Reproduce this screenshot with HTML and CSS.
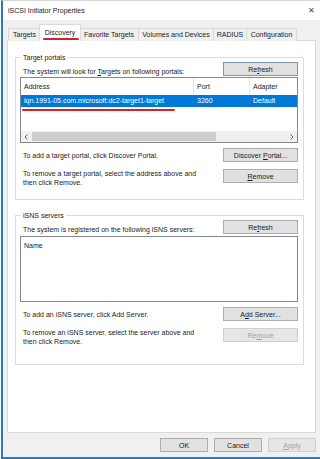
FILE: index.html
```html
<!DOCTYPE html>
<html lang="en">
<head>
    <meta charset="UTF-8">
    <meta name="viewport" content="width=device-width, initial-scale=1.0">
    <title>iSCSI Initiator Properties</title>
    <link rel="stylesheet" href="styles.css">
</head>
<body>
    <div class="window">
        <div class="titlebar">
            <span class="title">iSCSI Initiator Properties</span>
            <span class="close">&#x2715;</span>
        </div>

        <div class="tabs">
            <div class="tab tab-targets">Targets</div>
            <div class="tab tab-discovery active">Discovery</div>
            <div class="tab tab-favorite">Favorite Targets</div>
            <div class="tab tab-volumes">Volumes and Devices</div>
            <div class="tab tab-radius">RADIUS</div>
            <div class="tab tab-config">Configuration</div>
        </div>

        <div class="panel">
            <!-- Target portals -->
            <fieldset class="group group-portals">
                <legend>Target portals</legend>
                <div class="row row-top">
                    <span class="text">The system will look for <u>T</u>argets on following portals:</span>
                    <button class="btn default">Re<u>f</u>resh</button>
                </div>
                <div class="list list-portals">
                    <div class="list-head">
                        <span class="col col-address">Address</span>
                        <span class="col col-port">Port</span>
                        <span class="col col-adapter">Adapter</span>
                    </div>
                    <div class="list-row selected">
                        <span class="col col-address">iqn.1991-05.com.microsoft:dc2-target1-target</span>
                        <span class="col col-port">3260</span>
                        <span class="col col-adapter">Default</span>
                    </div>
                    <div class="list-fill"></div>
                    <div class="hscroll">
                        <svg class="arrow" width="11" height="6" viewBox="0 0 11 6"><path d="M6.5 0.5 L4 3 L6.5 5.5" fill="none" stroke="#606060" stroke-width="1"/></svg>
                        <div class="track"><div class="thumb"></div></div>
                        <svg class="arrow" width="11" height="6" viewBox="0 0 11 6"><path d="M4.5 0.5 L7 3 L4.5 5.5" fill="none" stroke="#606060" stroke-width="1"/></svg>
                    </div>
                </div>
                <div class="row row-add">
                    <span class="text">To add a target portal, click Discover Portal.</span>
                    <button class="btn">Discover <u>P</u>ortal...</button>
                </div>
                <div class="row row-remove">
                    <span class="text">To remove a target portal, select the address above and<br>then click Remove.</span>
                    <button class="btn"><u>R</u>emove</button>
                </div>
            </fieldset>

            <!-- iSNS servers -->
            <fieldset class="group group-isns">
                <legend>iSNS servers</legend>
                <div class="row row-top">
                    <span class="text">The system is registered on the following iSNS servers:</span>
                    <button class="btn">Re<u>f</u>resh</button>
                </div>
                <div class="list list-isns">
                    <div class="list-head plain">
                        <span class="col">Name</span>
                    </div>
                </div>
                <div class="row row-add">
                    <span class="text">To add an iSNS server, click Add Server.</span>
                    <button class="btn">A<u>d</u>d Server...</button>
                </div>
                <div class="row row-remove">
                    <span class="text">To remove an iSNS server, select the server above and<br>then click Remove.</span>
                    <button class="btn" disabled>Re<u>m</u>ove</button>
                </div>
            </fieldset>
        </div>

        <div class="footer">
            <button class="btn">OK</button>
            <button class="btn">Cancel</button>
            <button class="btn" disabled><u>A</u>pply</button>
        </div>
    </div>
</body>
</html>
```

FILE: styles.css
```css
body {
    margin: 0;
    padding: 0;
    background: #ffffff;
    font-family: 'Liberation Sans', Arial, sans-serif;
    font-size: 7px;
    color: #1a1a1a;
    overflow: hidden;
}

.window {
    box-sizing: border-box;
    width: 319px;
    height: 459px;
    margin-left: 1px;
    background: #f0f0f0;
    border-left: 2px solid #2b7ac0;
    border-bottom: 2px solid #2b7ac0;
    border-top: 1px solid #d6d6d6;
}

.titlebar {
    display: flex;
    justify-content: space-between;
    align-items: center;
    height: 19px;
    padding: 0 5px 0 5px;
    background: #ffffff;
}
.close {
    font-size: 8px;
    color: #444;
}

/* Tabs */
.tabs {
    display: flex;
    align-items: flex-end;
    height: 21px;
    padding-left: 5px;
    margin-bottom: -1px;
    position: relative;
    z-index: 1;
}
.tab {
    box-sizing: border-box;
    height: 13px;
    padding-top: 2px;
    text-align: center;
    background: #f0f0f0;
    border: 1px solid #d9d9d9;
    border-bottom: none;
    margin-right: -1px;
}
.tab-targets { width: 33px; }
.tab-discovery { width: 42px; }
.tab-favorite { width: 60px; }
.tab-volumes { width: 76px; }
.tab-radius { width: 34px; }
.tab-config { width: 51px; }
.tab.active {
    position: relative;
    height: 17px;
    padding-top: 4px;
    background: #ffffff;
    margin-left: -1px;
    margin-right: -2px;
    z-index: 2;
}
.tab.active::after {
    content: "";
    position: absolute;
    left: 3px;
    right: 1px;
    top: 13px;
    height: 2px;
    background: #d42030;
    border-radius: 1px;
}

/* Panel */
.panel {
    box-sizing: border-box;
    height: 393px;
    margin: 0 4px 0 4px;
    background: #ffffff;
    border: 1px solid #d9d9d9;
    padding: 12px 11px 0 7px;
}

.group {
    box-sizing: border-box;
    margin: 0;
    padding: 0 5px 0 4px;
    border: 1px solid #dcdcdc;
    min-width: 0;
}
.group legend {
    padding: 0 2px;
    margin-left: 1px;
    line-height: 9px;
}
.group-portals {
    height: 147px;
}
.group-isns {
    height: 154px;
    margin-top: 11px;
}

.row {
    display: flex;
    justify-content: space-between;
}
.row .text {
    margin-left: 3px;
    line-height: 9px;
}
.row-top {
    align-items: flex-end;
}
.row-add {
    align-items: center;
    margin-top: 5px;
}
.row-remove {
    align-items: flex-start;
    margin-top: 7px;
}

/* Buttons */
.btn {
    box-sizing: border-box;
    width: 75px;
    height: 14px;
    padding: 0;
    font-family: inherit;
    font-size: 7px;
    color: #1a1a1a;
    background: #e1e1e1;
    border: 1px solid #adadad;
}
.btn.default {
    border-color: #7f95ad;
}
.btn:disabled {
    color: #a3a3a3;
    background: #e6e6e6;
    border-color: #d0d0d0;
}

/* Lists */
.list {
    box-sizing: border-box;
    margin-top: 1px;
    background: #fff;
    border: 1px solid #828790;
    display: flex;
    flex-direction: column;
}
.list-portals {
    height: 66px;
}
.list-isns {
    height: 66px;
    margin-top: 2px;
}
.list-head {
    display: flex;
    height: 17px;
    align-items: center;
}
.list-head .col {
    align-self: stretch;
    display: flex;
    align-items: center;
    border-right: 1px solid #e5e5e5;
}
.list-head.plain .col {
    border-right: none;
}
.col {
    box-sizing: border-box;
    padding-left: 3px;
    white-space: nowrap;
    overflow: hidden;
}
.col-address { width: 173px; }
.col-port { width: 56px; }
.col-adapter { flex: 1; }
.list-head .col-adapter { border-right: none; }

.list-row {
    display: flex;
    height: 12px;
    line-height: 12px;
    position: relative;
}
.list-row.selected {
    background: #0078d7;
    color: #fff;
}
.list-row.selected::after {
    content: "";
    position: absolute;
    left: 1px;
    width: 153px;
    top: 14px;
    height: 2px;
    background: #d42030;
    border-radius: 1px;
}
.list-fill {
    flex: 1;
}
.hscroll {
    display: flex;
    align-items: center;
    height: 11px;
    background: #f0f0f0;
}
.hscroll .arrow {
    display: block;
}
.track {
    flex: 1;
    height: 100%;
}
.thumb {
    width: 184px;
    height: 9px;
    margin-top: 1px;
    background: #cdcdcd;
}

/* Footer */
.footer {
    display: flex;
    justify-content: flex-end;
    gap: 6px;
    padding: 5px 4px 0 0;
}
.footer .btn {
    width: 48px;
}
```
